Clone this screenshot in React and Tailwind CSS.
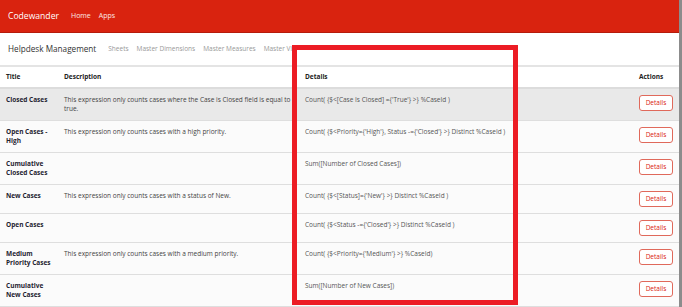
import React from "react";

const rows = [
  {
    title: "Closed Cases",
    desc: "This expression only counts cases where the Case is Closed field is equal to true.",
    expr: "Count( {$<[Case Is Closed] ={'True'} >} %CaseId )",
    active: true,
  },
  {
    title: "Open Cases - High",
    desc: "This expression only counts cases with a high priority.",
    expr: "Count( {$<Priority={'High'}, Status -={'Closed'} >} Distinct %CaseId )",
  },
  {
    title: "Cumulative Closed Cases",
    desc: "",
    expr: "Sum([Number of Closed Cases])",
  },
  {
    title: "New Cases",
    desc: "This expression only counts cases with a status of New.",
    expr: "Count( {$<[Status]={'New'} >} Distinct %CaseId )",
  },
  {
    title: "Open Cases",
    desc: "",
    expr: "Count( {$<Status -={'Closed'} >} Distinct %CaseId )",
  },
  {
    title: "Medium Priority Cases",
    desc: "This expression only counts cases with a medium priority.",
    expr: "Count( {$<Priority={'Medium'} >} %CaseId)",
  },
  {
    title: "Cumulative New Cases",
    desc: "",
    expr: "Sum([Number of New Cases])",
  },
];

const navLinks = ["Sheets", "Master Dimensions", "Master Measures", "Master Visualizations"];

export default function App() {
  return (
    <div className="relative flex h-[307px] w-[682px] overflow-hidden bg-white font-['Open_Sans',sans-serif]">
      <div className="flex min-w-0 flex-1 flex-col">
        {/* Top bar */}
        <header className="flex h-[33px] shrink-0 items-center border-b border-[#b51c0b] bg-[#d9230f] px-2">
          <span className="text-[8.6px] text-white">Codewander</span>
          <nav className="ml-[12px] flex gap-[8px] text-[7px] text-white/90">
            <span>Home</span>
            <span>Apps</span>
          </nav>
        </header>

        {/* App nav */}
        <div className="flex h-[34px] shrink-0 items-center border-b-2 border-[#e4e4e4] px-2">
          <h1 className="text-[8.2px] text-[#333]">Helpdesk Management</h1>
          <nav className="ml-[12px] flex w-[184px] gap-[8px] overflow-hidden whitespace-nowrap text-[6.5px] text-[#999]">
            {navLinks.map((l) => (
              <span key={l}>{l}</span>
            ))}
          </nav>
        </div>

        {/* Table */}
        <table className="w-full table-fixed border-collapse bg-[#fbfbfb] text-[6.5px] leading-[9.5px]">
          <colgroup>
            <col className="w-[58px]" />
            <col className="w-[241px]" />
            <col />
            <col className="w-[46px]" />
          </colgroup>
          <thead>
            <tr className="border-b-2 border-[#dcdcdc] bg-white text-left font-bold text-[#222]">
              <th className="px-[6px] py-[5px]">Title</th>
              <th className="px-[6px] py-[5px]">Description</th>
              <th className="px-[6px] py-[5px]">Details</th>
              <th className="px-[6px] py-[5px]">Actions</th>
            </tr>
          </thead>
          <tbody>
            {rows.map((r) => (
              <tr
                key={r.title}
                className={`border-b border-[#dedede] align-top ${r.active ? "bg-[#e9e9e9]" : ""}`}
              >
                <td className="px-[6px] py-[6px] font-bold text-[#1f2330]">{r.title}</td>
                <td className="px-[6px] py-[6px] text-[#444]">{r.desc}</td>
                <td className="px-[6px] py-[6px] text-[#555]">{r.expr}</td>
                <td className="py-[6px] pl-[6px] pr-[5px]">
                  <button className="flex h-[16px] w-[34px] items-center justify-center rounded-[3px] border border-[#e0695b] bg-white text-[6.5px] text-[#d9230f]">
                    Details
                  </button>
                </td>
              </tr>
            ))}
          </tbody>
        </table>
      </div>

      {/* window edge */}
      <div className="w-[3px] shrink-0 bg-[#8c8c8c]" />

      {/* annotation box */}
      <div className="pointer-events-none absolute left-[292px] top-[45px] h-[260px] w-[226px] border-[5px] border-[#ec1c24]" />
    </div>
  );
}
